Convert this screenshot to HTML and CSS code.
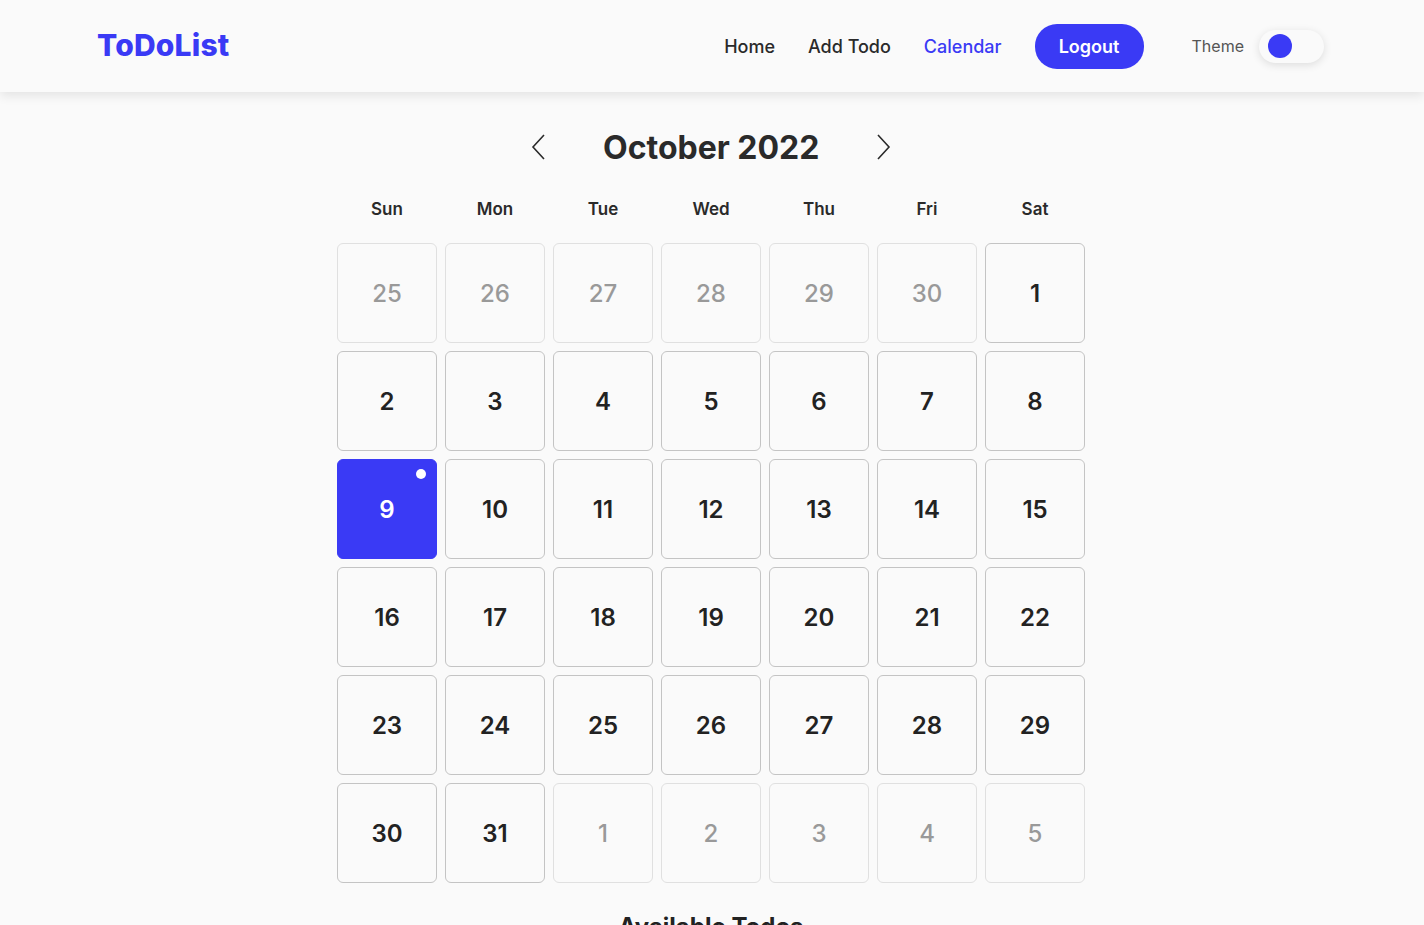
FILE: index.html
```html
<!DOCTYPE html>
<html>
<head>
<meta charset="utf-8">
<title>ToDoList</title>
<link rel="stylesheet" href="styles.css">
</head>
<body>
<header class="header">
  <div class="logo">ToDoList</div>
  <nav class="nav">
    <a class="nav-link">Home</a>
    <a class="nav-link">Add Todo</a>
    <a class="nav-link active">Calendar</a>
    <button class="logout">Logout</button>
    <span class="theme-label">Theme</span>
    <span class="toggle"><span class="knob"></span></span>
  </nav>
</header>
<main class="main">
  <div class="cal-head">
    <button class="arrow"><svg width="16" height="26" viewBox="0 0 16 26"><path d="M13 1 L2 13 L13 25" fill="none" stroke="#2a2a2a" stroke-width="1.6"/></svg></button>
    <h1 class="month">October 2022</h1>
    <button class="arrow"><svg width="16" height="26" viewBox="0 0 16 26"><path d="M3 1 L14 13 L3 25" fill="none" stroke="#2a2a2a" stroke-width="1.6"/></svg></button>
  </div>
  <div class="grid">
    <div class="dow">Sun</div><div class="dow">Mon</div><div class="dow">Tue</div><div class="dow">Wed</div><div class="dow">Thu</div><div class="dow">Fri</div><div class="dow">Sat</div>
    <div class="cell other">25</div><div class="cell other">26</div><div class="cell other">27</div><div class="cell other">28</div><div class="cell other">29</div><div class="cell other">30</div><div class="cell">1</div>
    <div class="cell">2</div><div class="cell">3</div><div class="cell">4</div><div class="cell">5</div><div class="cell">6</div><div class="cell">7</div><div class="cell">8</div>
    <div class="cell selected">9<span class="dot"></span></div><div class="cell">10</div><div class="cell">11</div><div class="cell">12</div><div class="cell">13</div><div class="cell">14</div><div class="cell">15</div>
    <div class="cell">16</div><div class="cell">17</div><div class="cell">18</div><div class="cell">19</div><div class="cell">20</div><div class="cell">21</div><div class="cell">22</div>
    <div class="cell">23</div><div class="cell">24</div><div class="cell">25</div><div class="cell">26</div><div class="cell">27</div><div class="cell">28</div><div class="cell">29</div>
    <div class="cell">30</div><div class="cell">31</div><div class="cell other">1</div><div class="cell other">2</div><div class="cell other">3</div><div class="cell other">4</div><div class="cell other">5</div>
  </div>
  <h2 class="todos-title">Available Todos</h2>
</main>
</body>
</html>
```
FILE: styles.css
```css
* { box-sizing: border-box; }
html, body { margin: 0; padding: 0; }
body {
  background: #fafafa;
  font-family: Inter, "Noto Sans", sans-serif;
  color: #222;
  overflow: hidden;
  height: 925px;
}
.header {
  height: 92px;
  display: flex;
  align-items: center;
  justify-content: space-between;
  padding: 0 100px 0 97px;
  background: #fafafa;
  box-shadow: 0 4px 10px rgba(0,0,0,0.09);
  position: relative;
}
.logo {
  font-size: 30px;
  font-weight: 800;
  color: #3a3af5;
  margin-top: -3px;
  letter-spacing: 0.2px;
}
.nav {
  display: flex;
  align-items: center;
}
.nav-link {
  font-size: 18px;
  font-weight: 500;
  color: #2a2a2a;
  margin-right: 33px;
}
.nav-link.active { color: #3a3af5; }
.logout {
  background: #3a3af5;
  color: #fff;
  border: none;
  border-radius: 22px;
  width: 109px;
  height: 45px;
  font-family: inherit;
  font-size: 18px;
  font-weight: 600;
  margin-right: 48px;
}
.theme-label {
  font-size: 16px;
  color: #555;
  margin-right: 15px;
}
.toggle {
  width: 65px;
  height: 33px;
  border-radius: 17px;
  background: #fafafa;
  box-shadow: 0 2px 8px rgba(0,0,0,0.12);
  display: flex;
  align-items: center;
  padding-left: 9px;
}
.knob {
  width: 24px;
  height: 24px;
  border-radius: 50%;
  background: #3a3af5;
}
.main {
  display: flex;
  flex-direction: column;
  align-items: center;
  padding-top: 34px;
  padding-right: 2px;
}
.cal-head {
  display: flex;
  align-items: center;
  height: 42px;
}
.arrow {
  background: none;
  border: none;
  padding: 0;
  width: 16px;
  height: 26px;
  display: flex;
}
.month {
  margin: 0 56px;
  font-size: 32px;
  font-weight: 700;
  color: #2a2a2a;
  width: 216px;
  text-align: center;
  white-space: nowrap;
}
.grid {
  display: grid;
  grid-template-columns: repeat(7, 100px);
  grid-template-rows: 36px;
  grid-auto-rows: 100px;
  gap: 8px;
  margin-top: 31px;
}
.grid .dow {
  height: 22px;
  text-align: center;
  font-size: 17px;
  font-weight: 600;
  color: #2a2a2a;
  align-self: start;
}
.cell {
  border: 1px solid #c4c4c4;
  border-radius: 6px;
  display: flex;
  align-items: center;
  justify-content: center;
  font-size: 24px;
  font-weight: 600;
  color: #222;
  position: relative;
}
.cell.other {
  border-color: #e0e0e0;
  color: #999;
  font-weight: 500;
}
.cell.selected {
  background: #3a3af5;
  border-color: #3a3af5;
  color: #fff;
}
.dot {
  position: absolute;
  top: 9px;
  right: 10px;
  width: 10px;
  height: 10px;
  border-radius: 50%;
  background: #fff;
}
.todos-title {
  margin: 29px 0 0;
  font-size: 24px;
  font-weight: 700;
  color: #222;
}
```
